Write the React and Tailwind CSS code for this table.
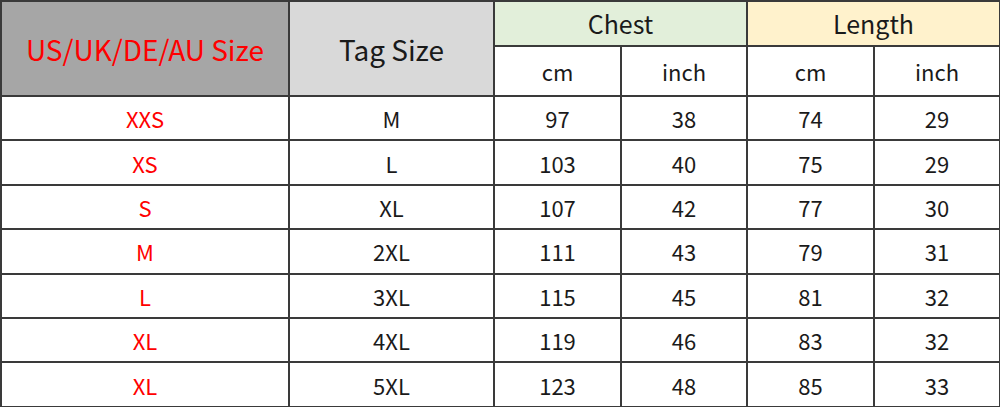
const rows = [
  ['XXS', 'M', 97, 38, 74, 29],
  ['XS', 'L', 103, 40, 75, 29],
  ['S', 'XL', 107, 42, 77, 30],
  ['M', '2XL', 111, 43, 79, 31],
  ['L', '3XL', 115, 45, 81, 32],
  ['XL', '4XL', 119, 46, 83, 32],
  ['XL', '5XL', 123, 48, 85, 33],
];

const cell = 'border-2 border-[#3a3a3a] text-center align-middle p-0';

export default function App() {
  return (
    <div className="w-[1000px] h-[407px] bg-white overflow-hidden" style={{ fontFamily: '"Noto Sans CJK SC", "Noto Sans", sans-serif' }}>
      <table className="table-fixed border-collapse w-[999px] text-[#1a1a1a] text-[22px] leading-none">
        <colgroup>
          <col className="w-[288px]" />
          <col className="w-[205px]" />
          <col className="w-[127px]" />
          <col className="w-[126px]" />
          <col className="w-[127px]" />
          <col className="w-[126px]" />
        </colgroup>
        <thead>
          <tr className="h-[45px]">
            <th rowSpan={2} className={`${cell} bg-[#a6a6a6] text-[#ff0000] font-normal text-[28px]`}>US/UK/DE/AU Size</th>
            <th rowSpan={2} className={`${cell} bg-[#d9d9d9] font-normal text-[28px]`}>Tag Size</th>
            <th colSpan={2} className={`${cell} bg-[#e2efda] font-normal text-[25px]`}>Chest</th>
            <th colSpan={2} className={`${cell} bg-[#fff2cc] font-normal text-[25px]`}>Length</th>
          </tr>
          <tr className="h-[50px]">
            <th className={`${cell} font-normal`}>cm</th>
            <th className={`${cell} font-normal`}>inch</th>
            <th className={`${cell} font-normal`}>cm</th>
            <th className={`${cell} font-normal`}>inch</th>
          </tr>
        </thead>
        <tbody>
          {rows.map((r, i) => (
            <tr key={i} className="h-[44.4px]">
              <td className={`${cell} text-[#ff0000]`}>{r[0]}</td>
              {r.slice(1).map((v, j) => (
                <td key={j} className={cell}>{v}</td>
              ))}
            </tr>
          ))}
        </tbody>
      </table>
    </div>
  );
}
